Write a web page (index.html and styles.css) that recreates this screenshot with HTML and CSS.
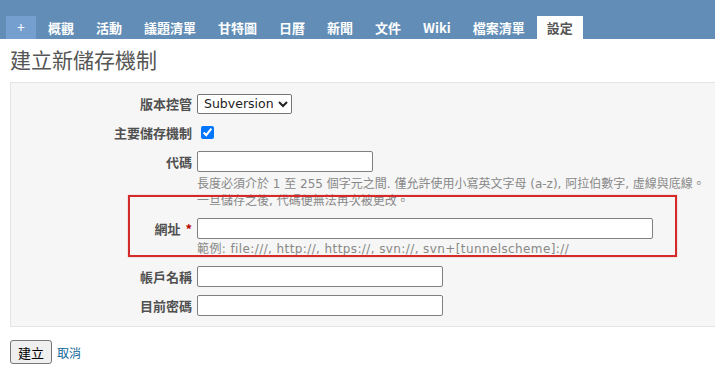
FILE: index.html
```html
<!DOCTYPE html>
<html lang="zh-Hant">
<head>
    <meta charset="UTF-8">
    <title>建立新儲存機制</title>
    <link rel="stylesheet" href="styles.css">
</head>
<body>

<div class="header">
    <ul class="main-menu">
        <li><a class="new-object" href="#">+</a></li>
        <li><a href="#">概觀</a></li>
        <li><a href="#">活動</a></li>
        <li><a href="#">議題清單</a></li>
        <li><a href="#">甘特圖</a></li>
        <li><a href="#">日曆</a></li>
        <li><a href="#">新聞</a></li>
        <li><a href="#">文件</a></li>
        <li><a href="#">Wiki</a></li>
        <li><a href="#">檔案清單</a></li>
        <li><a class="selected" href="#">設定</a></li>
    </ul>
</div>

<div class="content">
    <h2 class="page-title">建立新儲存機制</h2>

    <form>
        <div class="box tabular">
            <div class="row">
                <label class="row-label">版本控管</label>
                <select class="scm-select">
                    <option>Subversion</option>
                </select>
            </div>
            <div class="row">
                <label class="row-label">主要儲存機制</label>
                <input type="checkbox" class="check" checked>
            </div>
            <div class="row">
                <label class="row-label">代碼</label>
                <input type="text" class="field field-short">
            </div>
            <div class="hint hint-multi">長度必須介於 1 至 255 個字元之間. 僅允許使用小寫英文字母 (a-z), 阿拉伯數字, 虛線與底線。<br>一旦儲存之後, 代碼便無法再次被更改。</div>
            <div class="row row-url">
                <label class="row-label">網址 <span class="required">*</span></label>
                <input type="text" class="field field-long">
            </div>
            <div class="hint hint-example">範例: file:///, http://, https://, svn://, svn+[tunnelscheme]://</div>
            <div class="row">
                <label class="row-label">帳戶名稱</label>
                <input type="text" class="field field-mid">
            </div>
            <div class="row row-last">
                <label class="row-label">目前密碼</label>
                <input type="password" class="field field-mid">
            </div>

            <!-- annotation frame drawn over the url row -->
            <div class="highlight"></div>
        </div>

        <div class="actions">
            <button type="button" class="btn">建立</button>
            <a href="#" class="cancel">取消</a>
        </div>
    </form>
</div>

</body>
</html>
```

FILE: styles.css
```css
body, html {
    margin: 0;
    padding: 0;
    background-color: #fff;
    color: #333;
    font-family: "Noto Sans CJK TC", "Noto Sans", sans-serif;
    font-size: 12px;
    overflow: hidden;
}
.header {
    background-color: #628DB6;
    height: 39px;
    display: flex;
    align-items: flex-end;
}
.main-menu {
    list-style: none;
    margin: 0;
    padding: 0 0 0 6px;
    display: flex;
}
.main-menu li {
    margin-right: 2px;
}
.main-menu a {
    display: block;
    height: 23px;
    line-height: 23px;
    padding: 0 10px;
    font-size: 13px;
    font-weight: bold;
    color: #fff;
    text-decoration: none;
}
.main-menu a.new-object {
    width: 30px;
    padding: 0;
    text-align: center;
    background-color: #759FCF;
    font-weight: normal;
    font-size: 14px;
}
.main-menu a.selected {
    background-color: #fff;
    color: #555;
}
.content {
    padding: 0 0 0 10px;
}
.page-title {
    margin: 7px 0 10px 0;
    font-size: 21px;
    line-height: 26px;
    font-weight: normal;
    color: #555;
}
.box {
    position: relative;
    background-color: #f6f6f6;
    border: 1px solid #e4e4e4;
    border-right: none;
    padding: 10px 0 10px 0;
}
.row {
    display: flex;
    align-items: center;
    min-height: 21px;
    margin-bottom: 8px;
}
.row-last {
    margin-bottom: 0;
}
.row-label {
    width: 181px;
    margin-right: 5px;
    text-align: right;
    font-weight: bold;
    font-size: 13px;
    color: #505050;
    white-space: nowrap;
}
.required {
    color: #bb0000;
    font-weight: bold;
    margin-left: 2px;
}
.scm-select {
    width: 95px;
    height: 20px;
    font-family: "DejaVu Sans", sans-serif;
    font-size: 12.5px;
    padding: 0 2px;
    margin: 0;
    border: 1px solid #767676;
    border-radius: 2px;
    background-color: #fff;
    color: #222;
}
.check {
    width: 13px;
    height: 13px;
    margin: 0 0 0 4px;
    accent-color: #0075ff;
}
.field {
    height: 21px;
    box-sizing: border-box;
    margin: 0;
    border: 1px solid #808080;
    border-radius: 2px;
    background-color: #fff;
    font-size: 12px;
}
.field-short {
    width: 176px;
}
.field-long {
    width: 456px;
}
.field-mid {
    width: 246px;
}
.hint {
    margin: 0 0 8px 186px;
    color: #888;
    font-family: "DejaVu Sans", "Noto Sans CJK TC", sans-serif;
    font-size: 12px;
    line-height: 17px;
    white-space: nowrap;
}
.hint-multi {
    margin-top: -4px;
    margin-bottom: 8px;
}
.hint-example {
    letter-spacing: 0.4px;
}
.row-url {
    margin-bottom: 2px;
}
.highlight {
    position: absolute;
    left: 117px;
    top: 112px;
    width: 549px;
    height: 62px;
    box-sizing: border-box;
    border: 2px solid #d42a2a;
    box-shadow: 0 0 1px rgba(212, 42, 42, 0.5);
    pointer-events: none;
}
.actions {
    display: flex;
    align-items: center;
    margin-top: 13px;
}
.btn {
    height: 24px;
    padding: 0 7px;
    font-family: "Noto Sans CJK TC", sans-serif;
    font-size: 13px;
    color: #000;
    background-color: #efefef;
    border: 1px solid #767676;
    border-radius: 3px;
    margin: 0 5px 0 0;
}
.cancel {
    color: #169;
    text-decoration: none;
    font-size: 12px;
}
```
